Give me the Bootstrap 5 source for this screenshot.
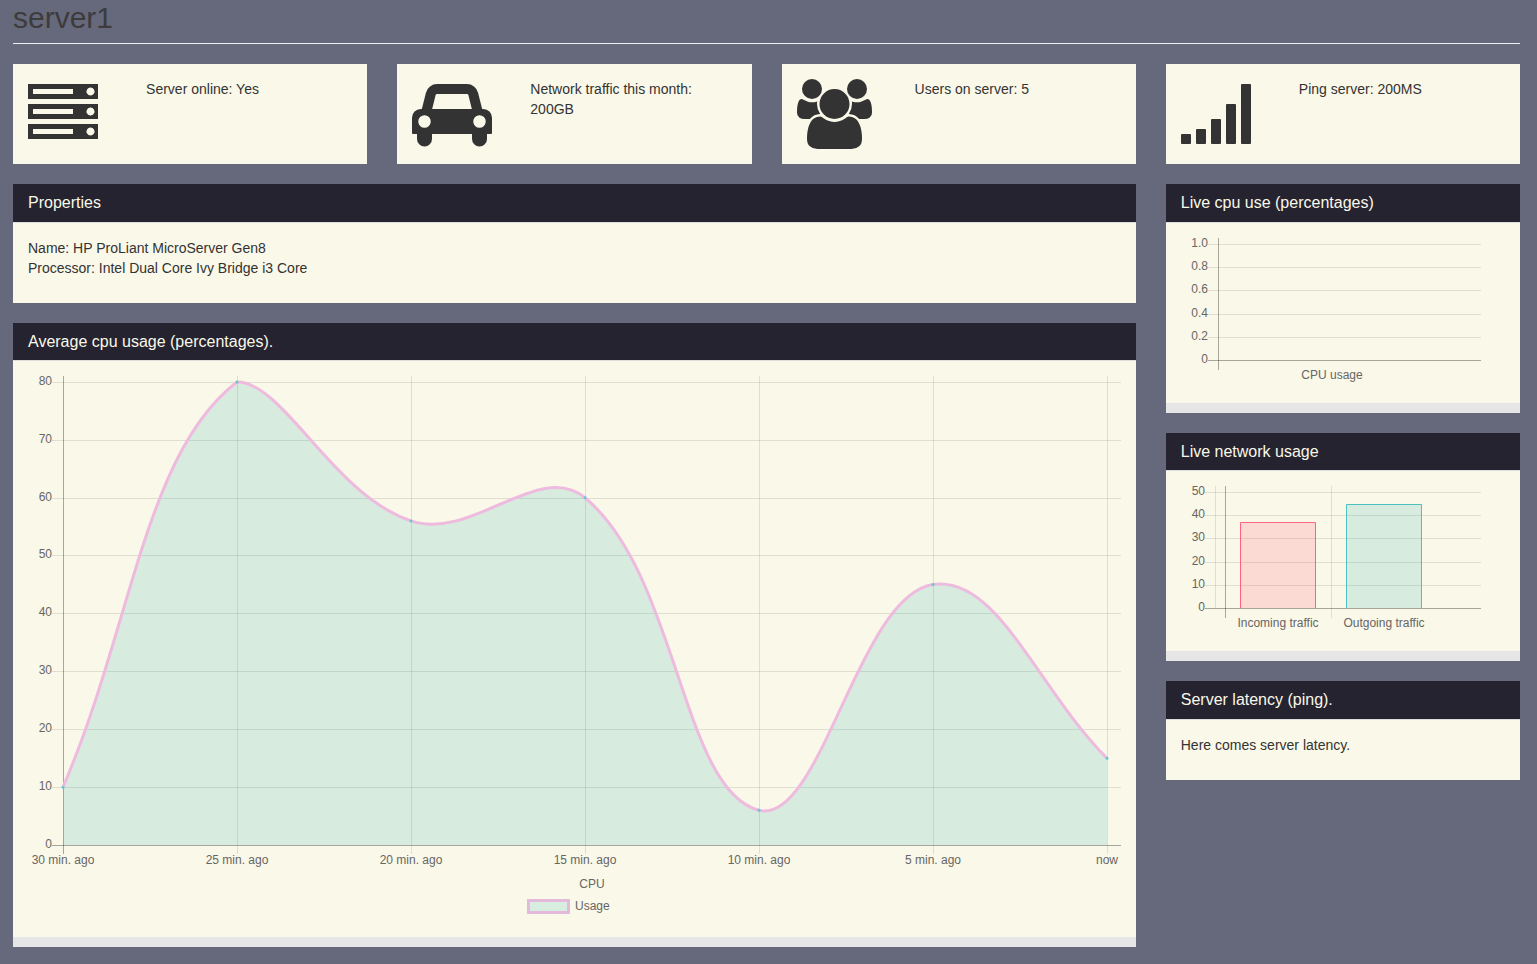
<!DOCTYPE html>
<html lang="en">
<head>
<meta charset="utf-8">
<meta name="viewport" content="width=device-width, initial-scale=1">
<title>server1</title>
<link rel="stylesheet" href="https://cdn.jsdelivr.net/npm/bootstrap@5.3.0/dist/css/bootstrap.min.css">
<style>
  :root { --cream: #faf8e8; --ink: #333; --night: #252330; }
  body {
    background: #66697c;
    color: var(--ink);
    font: 14px/20px "Liberation Sans", Arial, sans-serif;
  }
  .page { padding: 1px 17px 17px 13px; }
  .page .row { --bs-gutter-x: 30px; }
  .page-title { padding-bottom: 9px; margin-bottom: 20px; border-bottom: 1px solid #eee; }
  .page-title h1 { color: #3c3c3c; font-size: 30px; font-weight: 400; line-height: 1.1; margin: 0; }
  .panel, .stat { background: var(--cream); margin-bottom: 20px; }
  .stat { padding: 15px; min-height: 100px; }
  .stat svg, .panel svg { display: block; }
  .stat svg { height: 70px; fill: var(--ink); }
  .panel-head { background: var(--night); border-bottom: 1px solid #ddd; padding: 10px 15px; }
  .panel-head h2 { color: var(--cream); font-size: 16px; font-weight: 400; line-height: 1.1; margin: 0; }
  .panel-main { padding: 15px; }
  .panel-main p { margin-bottom: 10px; }
  .panel-end { height: 10px; background: #e6e6e6; }
  .plot { font-size: 12px; max-width: 100%; overflow: visible; }
  .plot text { fill: #666; }
  .plot .ticks text { text-anchor: end; }
  .plot .names text { text-anchor: middle; }
  .grid-line { stroke: rgba(0,0,0,.1); fill: none; }
  .zero-line { stroke: rgba(0,0,0,.33); fill: none; }
  .plot-wide { width: 100%; height: 546px; }
  .area { fill: rgba(75,192,192,.2); }
  .curve { fill: none; stroke: #eebbdf; stroke-width: 3; }
  .dot { fill: #6cc4d0; }
  .swatch { fill: #d7ede0; stroke: #e3b9dc; stroke-width: 3; }
  .bar-in { fill: rgba(255,99,132,.2); stroke: #ff6384; }
  .bar-out { fill: rgba(75,192,192,.2); stroke: #4bc0c0; }
</style>
</head>
<body>
<main class="container-fluid page">
  <header class="page-title"><h1>server1</h1></header>

  <section class="row">
    <div class="col-12 col-sm-6 col-lg-3">
      <div class="stat"><div class="row">
        <div class="col-4">
          <svg width="70" height="70" viewBox="0 0 70 70" aria-hidden="true">
            <path fill-rule="evenodd" d="M0 5h70v15H0zM5 10v5h40v-5zM62.500 8.500a4 4 0 1 0 .01 0zM0 25h70v15H0zM5 30v5h40v-5zM62.500 28.500a4 4 0 1 0 .01 0zM0 45h70v15H0zM5 50v5h40v-5zM62.500 48.500a4 4 0 1 0 .01 0z"/>
          </svg>
        </div>
        <div class="col-8">Server online: Yes</div>
      </div></div>
    </div>
    <div class="col-12 col-sm-6 col-lg-3">
      <div class="stat"><div class="row">
        <div class="col-4">
          <svg width="80" height="70" viewBox="0 0 2048 1792" aria-hidden="true">
            <path d="M480 1088q0-66-47-113t-113-47-113 47-47 113 47 113 113 47 113-47 47-113zm36-320h1016l-89-357q-2-8-14-17.500t-21-9.500h-768q-9 0-21 9.500t-14 17.500zm1372 320q0-66-47-113t-113-47-113 47-47 113 47 113 113 47 113-47 47-113zm160-96v384q0 14-9 23t-23 9h-96v128q0 80-56 136t-136 56-136-56-56-136v-128h-1024v128q0 80-56 136t-136 56-136-56-56-136v-128h-96q-14 0-23-9t-9-23v-384q0-93 65.500-158.500t158.500-65.500h28l105-419q23-94 104-157.500t179-63.500h768q98 0 179 63.500t104 157.500l105 419h28q93 0 158.500 65.500t65.500 158.500z"/>
          </svg>
        </div>
        <div class="col-8">Network traffic this month: 200GB</div>
      </div></div>
    </div>
    <div class="col-12 col-sm-6 col-lg-3">
      <div class="stat"><div class="row">
        <div class="col-4">
          <svg width="75" height="70" viewBox="0 0 1920 1792" aria-hidden="true">
            <path d="M593 896q-162 5-265 128h-134q-82 0-138-40.500t-56-118.500q0-353 124-353 6 0 43.500 21t97.500 42.500 119 21.500q67 0 133-23-5 37-5 66 0 139 81 256zm1071 637q0 120-73 189.500t-194 69.500h-874q-121 0-194-69.500t-73-189.500q0-53 3.500-103.500t14-109 26.500-108.500 43-97.500 62-81 85.500-53.500 111.500-20q10 0 43 21.500t73 48 107 48 135 21.500 135-21.500 107-48 73-48 43-21.500q61 0 111.500 20t85.500 53.500 62 81 43 97.500 26.500 108.500 14 109 3.500 103.500zm-1024-1277q0 106-75 181t-181 75-181-75-75-181 75-181 181-75 181 75 75 181zm704 384q0 159-112.500 271.500t-271.500 112.500-271.500-112.500-112.500-271.500 112.500-271.500 271.500-112.500 271.500 112.500 112.500 271.500zm576 225q0 78-56 118.500t-138 40.500h-134q-103-123-265-128 81-117 81-256 0-29-5-66 66 23 133 23 59 0 119-21.500t97.500-42.500 43.500-21q124 0 124 353zm-128-609q0 106-75 181t-181 75-181-75-75-181 75-181 181-75 181 75 75 181z"/>
          </svg>
        </div>
        <div class="col-8">Users on server: 5</div>
      </div></div>
    </div>
    <div class="col-12 col-sm-6 col-lg-3">
      <div class="stat"><div class="row">
        <div class="col-4">
          <svg width="70" height="70" viewBox="0 0 70 70" aria-hidden="true">
            <rect x="0" y="55" width="10" height="10" rx="1"/>
            <rect x="15" y="50" width="10" height="15" rx="1"/>
            <rect x="30" y="40" width="10" height="25" rx="1"/>
            <rect x="45" y="25" width="10" height="40" rx="1"/>
            <rect x="60" y="5" width="10" height="60" rx="1"/>
          </svg>
        </div>
        <div class="col-8">Ping server: 200MS</div>
      </div></div>
    </div>
  </section>

  <div class="row">
    <div class="col-12 col-lg-9">
      <section class="panel">
        <div class="panel-head"><h2>Properties</h2></div>
        <div class="panel-main">
          <p>Name: HP ProLiant MicroServer Gen8<br>Processor: Intel Dual Core Ivy Bridge i3 Core</p>
        </div>
      </section>
      <section class="panel mb-0">
        <div class="panel-head"><h2>Average cpu usage (percentages).</h2></div>
        <div class="panel-main">
          <svg id="cpuHistory" class="plot plot-wide" role="img" aria-label="Average cpu usage"></svg>
        </div>
        <div class="panel-end"></div>
      </section>
    </div>

    <div class="col-12 col-lg-3">
      <section class="panel">
        <div class="panel-head"><h2>Live cpu use (percentages)</h2></div>
        <div class="panel-main">
          <svg class="plot" width="300" height="150" viewBox="0 0 300 150" role="img" aria-label="Live cpu use">
            <path class="grid-line" d="M27 6.500H300M27 29.500H300M27 52.500H300M27 76.500H300M27 99.500H300"/>
            <path class="zero-line" d="M27 122.500H300M37.500 0V132"/>
            <g class="ticks">
              <text x="27" y="9">1.0</text><text x="27" y="32">0.8</text><text x="27" y="55">0.6</text>
              <text x="27" y="79">0.4</text><text x="27" y="102">0.2</text><text x="27" y="125">0</text>
            </g>
            <g class="names"><text x="151" y="141">CPU usage</text></g>
          </svg>
        </div>
        <div class="panel-end"></div>
      </section>
      <section class="panel">
        <div class="panel-head"><h2>Live network usage</h2></div>
        <div class="panel-main">
          <svg class="plot" width="300" height="150" viewBox="0 0 300 150" role="img" aria-label="Live network usage">
            <path class="grid-line" d="M24 6.500H300M24 29.500H300M24 52.500H300M24 76.500H300M24 99.500H300M34.500 0V122M150.500 0V132"/>
            <path class="zero-line" d="M24 122.500H300M44.500 0V132"/>
            <path class="bar-in" d="M59.500 122V36.500H134.500V122"/>
            <path class="bar-out" d="M165.500 122V18.500H240.500V122"/>
            <g class="ticks">
              <text x="24" y="9">50</text><text x="24" y="32">40</text><text x="24" y="55">30</text>
              <text x="24" y="79">20</text><text x="24" y="102">10</text><text x="24" y="125">0</text>
            </g>
            <g class="names"><text x="97" y="141">Incoming traffic</text><text x="203" y="141">Outgoing traffic</text></g>
          </svg>
        </div>
        <div class="panel-end"></div>
      </section>
      <section class="panel">
        <div class="panel-head"><h2>Server latency (ping).</h2></div>
        <div class="panel-main"><p>Here comes server latency.</p></div>
      </section>
    </div>
  </div>
</main>

<script src="https://cdn.jsdelivr.net/npm/bootstrap@5.3.0/dist/js/bootstrap.bundle.min.js"></script>
<script>
  const names = ['30 min. ago', '25 min. ago', '20 min. ago', '15 min. ago', '10 min. ago', '5 min. ago', 'now'];
  const values = [10, 80, 56, 60, 6, 45, 15];
  const svg = document.getElementById('cpuHistory');

  function draw() {
    const width = Math.round(svg.getBoundingClientRect().width);
    const left = 35, right = width - 14, top = 6, bottom = 469, tension = 0.4;
    const step = (right - left) / (names.length - 1);
    const yOf = v => bottom - v * (bottom - top) / 80;
    const crisp = n => Math.floor(n) + 0.5;
    const clamp = y => Math.min(bottom, Math.max(top, y));
    const pts = values.map((v, i) => ({ x: left + i * step, y: yOf(v) }));

    // Spline handles: each point leans along the line between its neighbours
    const handles = pts.map((p, i) => {
      const a = pts[i - 1] || p, b = pts[i + 1] || p;
      const da = Math.hypot(p.x - a.x, p.y - a.y), db = Math.hypot(b.x - p.x, b.y - p.y);
      const fa = tension * da / (da + db), fb = tension * db / (da + db);
      return {
        inX: p.x - fa * (b.x - a.x), inY: clamp(p.y - fa * (b.y - a.y)),
        outX: p.x + fb * (b.x - a.x), outY: clamp(p.y + fb * (b.y - a.y))
      };
    });
    let curve = `M${pts[0].x} ${pts[0].y}`;
    for (let i = 1; i < pts.length; i++) {
      const h = handles[i - 1], k = handles[i];
      curve += `C${h.outX} ${h.outY} ${k.inX} ${k.inY} ${pts[i].x} ${pts[i].y}`;
    }

    let lines = '', ticks = '', labels = '';
    for (let v = 0; v <= 80; v += 10) {
      const y = crisp(yOf(v) + 0.25);
      lines += `<path class="${v ? 'grid-line' : 'zero-line'}" d="M24 ${y}H${width}"/>`;
      ticks += `<text x="24" y="${Math.floor(y) + 3}">${v}</text>`;
    }
    pts.forEach((p, i) => {
      lines += `<path class="${i ? 'grid-line' : 'zero-line'}" d="M${crisp(p.x)} 0V478"/>`;
      labels += `<text x="${p.x}" y="488">${names[i]}</text>`;
    });
    const mid = Math.round((left + width) / 2);
    const keyX = Math.round(width / 2) - 47;
    svg.innerHTML = lines +
      `<path class="area" d="${curve}V${bottom}H${left}Z"/><path class="curve" d="${curve}"/>` +
      pts.map(p => `<circle class="dot" cx="${p.x}" cy="${p.y}" r="1.5"/>`).join('') +
      `<g class="ticks">${ticks}</g><g class="names">${labels}<text x="${mid}" y="512">CPU</text></g>` +
      `<rect class="swatch" x="${keyX + 0.5}" y="524.5" width="40" height="12"/>` +
      `<text x="${keyX + 47}" y="534">Usage</text>`;
  }
  draw();
  window.addEventListener('resize', draw);
</script>
</body>
</html>
